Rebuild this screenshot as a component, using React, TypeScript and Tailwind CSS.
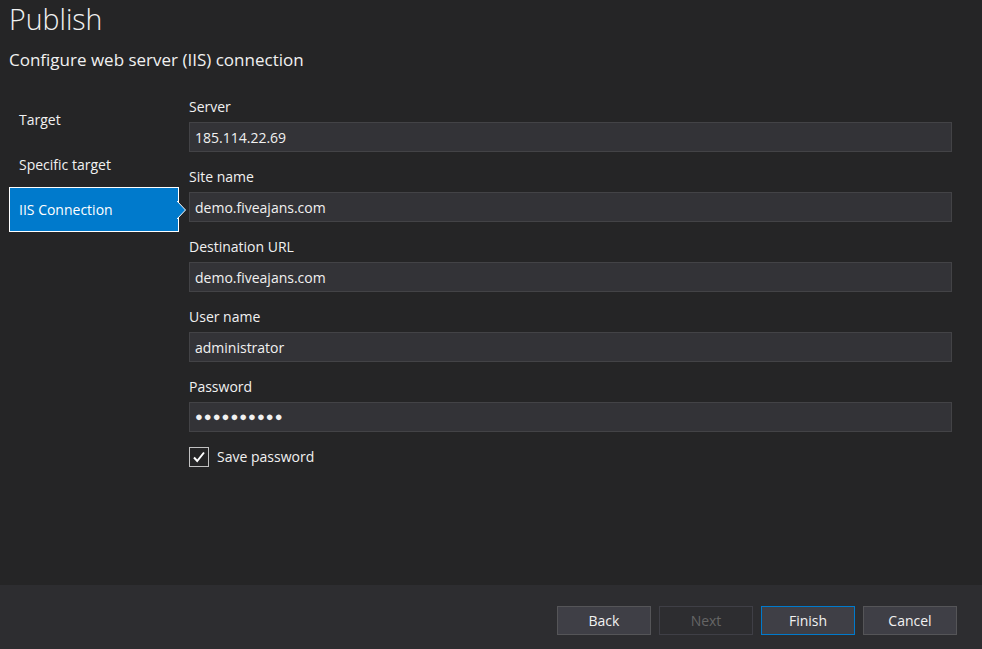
import React from "react";

const NAV = ["Target", "Specific target", "IIS Connection"];

const FIELDS = [
  { label: "Server", value: "185.114.22.69" },
  { label: "Site name", value: "demo.fiveajans.com" },
  { label: "Destination URL", value: "demo.fiveajans.com" },
  { label: "User name", value: "administrator" },
  { label: "Password", value: "●●●●●●●●●●", secret: true },
];

function Field({ label, value, secret }: { label: string; value: string; secret?: boolean }) {
  return (
    <div className="flex flex-col">
      <div className="h-[26px] text-[14px] leading-[22px] text-[#f1f1f1]">{label}</div>
      <div className="flex h-[30px] items-center border border-[#434346] bg-[#333337] px-[5px] text-[14px] text-[#f1f1f1]">
        {secret ? <span className="text-[13px] tracking-[1px]">{value}</span> : value}
      </div>
    </div>
  );
}

export default function App() {
  return (
    <div
      className="flex h-[649px] w-[982px] flex-col bg-[#252526] text-[#f1f1f1]"
      style={{ fontFamily: '"Open Sans", "Noto Sans", sans-serif' }}
    >
      {/* header */}
      <div className="pl-[9px]">
        <div className="h-[38px] text-[28.5px] font-light leading-[38px]">Publish</div>
        <div className="mt-[10px] text-[17px] leading-[24px]">Configure web server (IIS) connection</div>
      </div>

      {/* body */}
      <div className="mt-[24px] flex flex-1 pl-[9px] pr-[30px]">
        <div className="flex w-[170px] flex-col pt-[1px]">
          {NAV.map((item, i) =>
            i === 2 ? (
              <div
                key={item}
                className="relative flex h-[45px] items-center border border-white bg-[#007acc] pl-[9px] text-[14px] text-white"
              >
                {item}
                <svg className="absolute right-[-9px] top-[12px]" width="10" height="20" viewBox="0 0 10 20">
                  <path d="M0 1 L8.5 10 L0 19" fill="#007acc" stroke="#ffffff" strokeWidth="1" />
                </svg>
              </div>
            ) : (
              <div key={item} className="flex h-[45px] items-center pl-[10px] text-[14px]">
                {item}
              </div>
            )
          )}
        </div>
        <div className="ml-[10px] flex flex-1 flex-col">
          <div className="flex flex-col gap-[14px]">
            {FIELDS.map((f) => (
              <Field key={f.label} {...f} />
            ))}
          </div>
          <div className="mt-[14px] flex items-center gap-[8px]">
            <div className="flex h-[20px] w-[20px] items-center justify-center border border-[#c2c2c2]">
              <svg width="14" height="14" viewBox="0 0 14 14">
                <path d="M2 7.5 L5.2 11 L12 2.5" fill="none" stroke="#ffffff" strokeWidth="2" />
              </svg>
            </div>
            <span className="text-[14px]">Save password</span>
          </div>
        </div>
      </div>

      {/* footer */}
      <div className="flex h-[64px] items-center justify-end gap-[8px] bg-[#2d2d30] pr-[25px] pt-[7px]">
        <button className="h-[29px] w-[94px] border border-[#555558] bg-[#3f3f46] text-[14px] text-[#f1f1f1]">Back</button>
        <button className="h-[29px] w-[94px] border border-[#3f3f46] bg-[#2d2d30] text-[14px] text-[#656565]">Next</button>
        <button className="h-[29px] w-[94px] border border-[#007acc] bg-[#3f3f46] text-[14px] text-[#f1f1f1]">Finish</button>
        <button className="h-[29px] w-[94px] border border-[#555558] bg-[#3f3f46] text-[14px] text-[#f1f1f1]">Cancel</button>
      </div>
    </div>
  );
}
